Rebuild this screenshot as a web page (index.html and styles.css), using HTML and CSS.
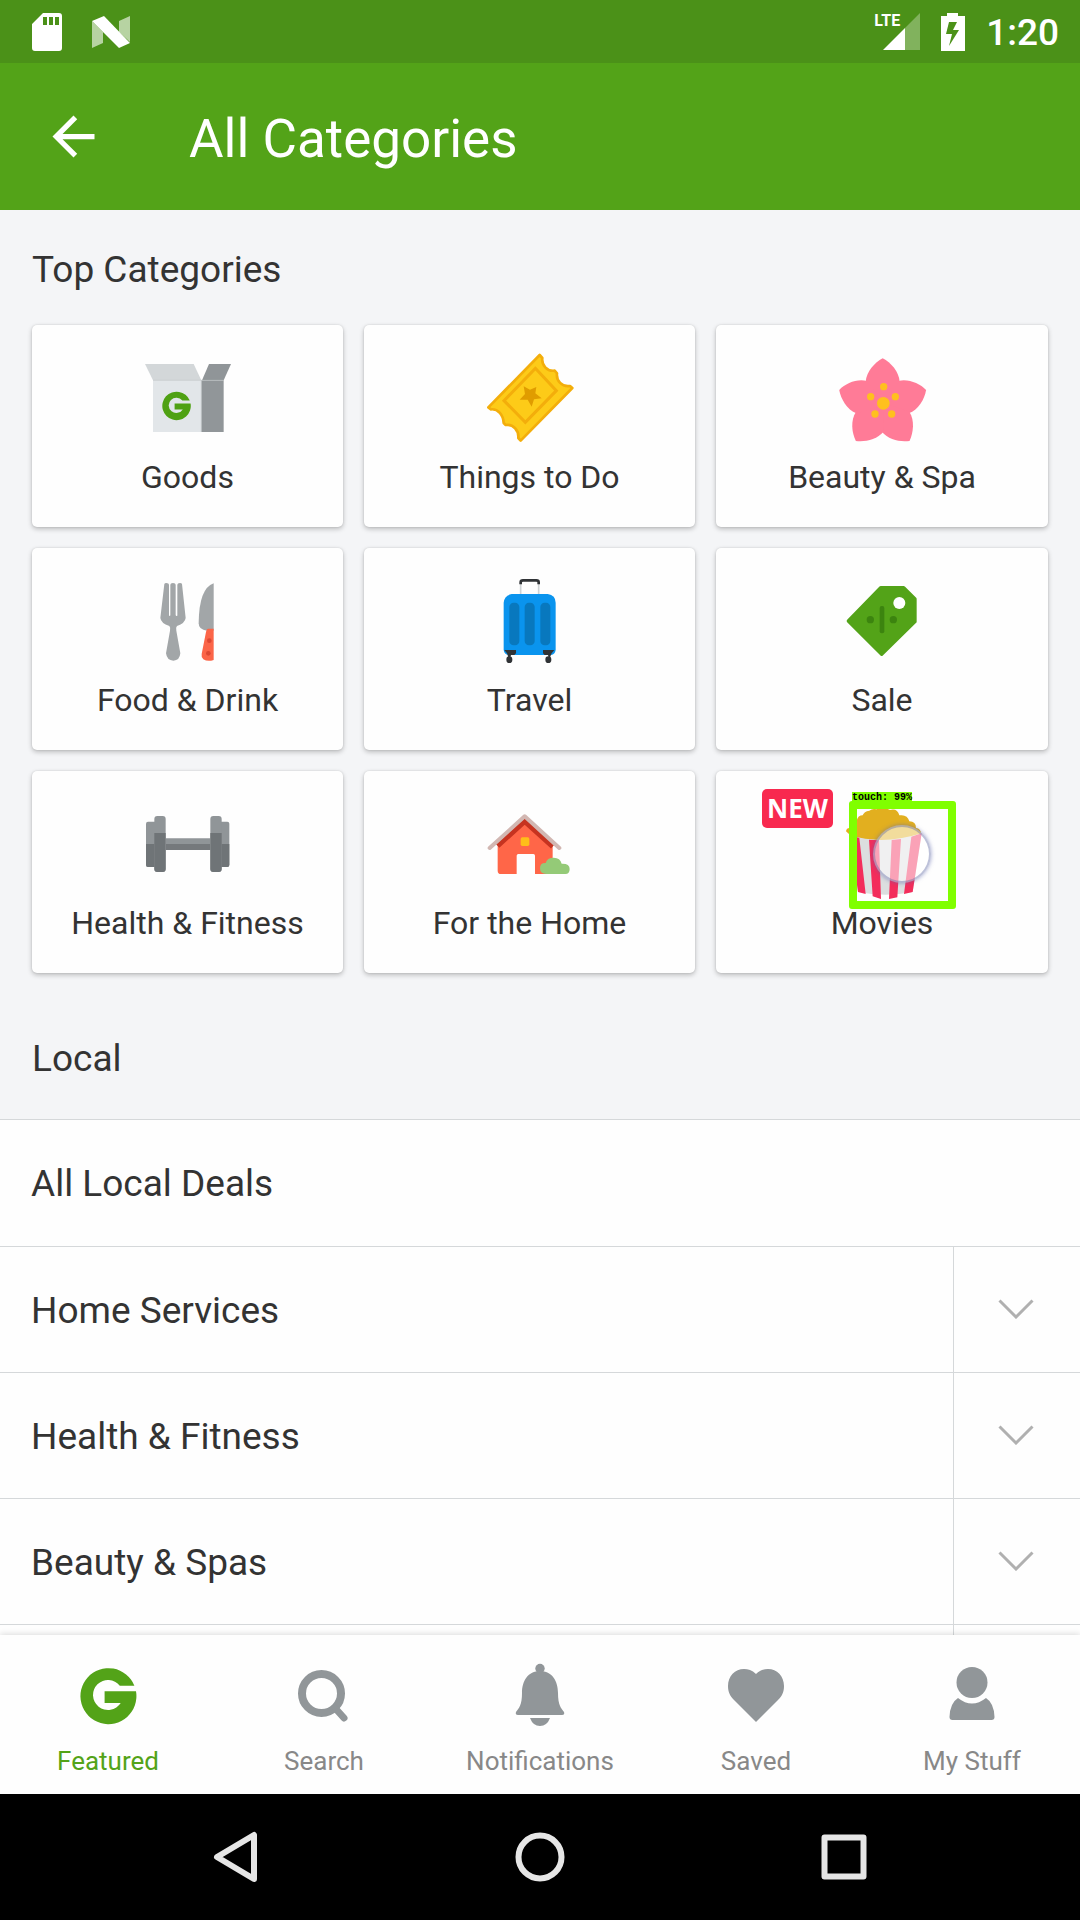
FILE: index.html
```html
<!DOCTYPE html>
<html lang="en">
<head>
<meta charset="utf-8">
<meta name="viewport" content="width=device-width, initial-scale=1">
<title>All Categories</title>
<link rel="stylesheet" href="styles.css">
</head>
<body>
<svg class="defs" aria-hidden="true">
  <symbol id="logo" viewBox="0 0 72 72"><path d="M62.400 26.700A28 28 0 1 0 64 32.300H32.600V44H48.700A15 15 0 1 1 47.800 26.700Z"/></symbol>
  <symbol id="chevron" viewBox="0 0 36 20"><path d="M1.500 1.500 18 18 34.500 1.500" fill="none" stroke="#b0b0b0" stroke-width="3"/></symbol>
</svg>
<div class="screen">
  <div class="status-bar">
    <div class="status-group notices">
      <svg width="30" height="38" viewBox="0 0 30 38"><path fill="#fff" fill-rule="evenodd" d="M11 0H27Q30 0 30 3V35Q30 38 27 38H3Q0 38 0 35V11ZM11 4V12H15V4ZM17 4V12H21V4ZM23 4V12H27V4Z"/></svg>
      <svg width="38" height="32" viewBox="0 0 38 32"><path fill="#fff" fill-opacity=".6" d="M0 5 11 16V27L0 32ZM38 0V26L27 16V5Z"/><path fill="#fff" d="M0 5 12 0 38 27 27 32Z"/></svg>
    </div>
    <div class="status-group system">
      <div class="signal">
        <span class="signal-type">LTE</span>
        <svg width="37" height="37" viewBox="0 0 37 37"><path fill="#fff" fill-opacity=".3" d="M37 0V37H22V15Z"/><path fill="#fff" d="M0 37 22 15V37Z"/></svg>
      </div>
      <svg width="24" height="38" viewBox="0 0 24 38"><path fill="#fff" fill-rule="evenodd" d="M6 0H17V3H24V38H0V3H6ZM8 9 5 21H11L8 33 18 17H12L16 9Z"/></svg>
      <span class="clock">1:20</span>
    </div>
  </div>

  <header class="app-bar">
    <button class="back" type="button" aria-label="Back"><svg width="63" height="63" viewBox="0 0 24 24"><path fill="#fff" d="M20 11H7.830l5.590-5.590L12 4l-8 8 8 8 1.410-1.410L7.830 13H20v-2z"/></svg></button>
    <h1 class="title">All Categories</h1>
  </header>

  <main class="content">
    <h2 class="section-title">Top Categories</h2>
    <div class="cards">
      <a class="card" href="#goods">
        <svg class="card-icon" viewBox="361 120 288 288">
          <path fill="#d3d7d9" d="M376 162H522L545 211H400Z"/><path fill="#e2e6e9" d="M400 211H545V366H400Z"/>
          <path fill="#909598" d="M568 162H634L612 211H547Z"/><path fill="#919699" d="M545 211H612V366H545Z"/>
          <path d="M400 211H612M545 211V366" stroke="#bfc4c7" stroke-width="2"/>
          <use href="#logo" x="415" y="231" width="110" height="110" fill="#4fa113"/>
        </svg>
        <span class="card-label">Goods</span>
      </a>
      <a class="card" href="#things">
        <svg class="card-icon" viewBox="397 120 288 288">
          <path fill="#fdcb18" stroke="#f3ae0b" stroke-width="8" stroke-linejoin="round" d="M570 135 578 144C575 165 592 185 615 182L622 190C619 212 637 232 661 228L668 234 513 392 506 384C508 362 491 341 468 345L462 339C461 315 445 296 424 298L416 292Z"/>
          <path fill="none" stroke="#f3ae0b" stroke-width="9" d="M557 175 620 242 527 337 463 272Z"/>
          <path fill="#e09c00" d="M522 229 541 239 560 231 557 250 576 265 553 268 546 290 534 269 510 269 526 252Z"/>
        </svg>
        <span class="card-label">Things to Do</span>
      </a>
      <a class="card" href="#beauty">
        <svg class="card-icon" viewBox="403 120 288 288">
          <g fill="#ff7b97">
            <path id="petal" d="M549 290 498 216C500 185 525 158 549 145C574 158 598 185 600 216Z"/>
            <use href="#petal" transform="rotate(72 549 282)"/><use href="#petal" transform="rotate(144 549 282)"/>
            <use href="#petal" transform="rotate(216 549 282)"/><use href="#petal" transform="rotate(288 549 282)"/>
          </g>
          <g fill="#ffc01e"><circle cx="551" cy="280" r="19"/><circle cx="552" cy="230" r="11"/><circle cx="513" cy="260" r="11"/><circle cx="587" cy="260" r="11"/><circle cx="526" cy="312" r="11"/><circle cx="576" cy="312" r="11"/></g>
        </svg>
        <span class="card-label">Beauty &amp; Spa</span>
      </a>

      <a class="card" href="#food">
        <svg class="card-icon" viewBox="361 99 288 288">
          <path fill="#a2a6a8" d="M434 132Q435 129 440 129Q448 129 448 134V224Q448 228 450 228T452 224V134Q452 129 460 129T468 134V224Q468 228 471 228T473 224V134Q473 129 481 129Q486 129 487 132L498 234Q496 250 472 258Q468 262 470 272L482 340Q480 362 461 362T439 340L451 272Q453 262 449 258Q424 250 422 234Z"/>
          <path fill="#a2a6a8" d="M582 130V272H562Q537 270 537 250Q538 145 582 130Z"/>
          <path fill="#fb6548" d="M566 266H582V360Q564 366 551 358Q544 352 546 342L559 276Q561 266 566 266Z"/>
          <circle cx="569" cy="302" r="7" fill="#dd4832"/><circle cx="566" cy="340" r="7" fill="#dd4832"/>
        </svg>
        <span class="card-label">Food &amp; Drink</span>
      </a>
      <a class="card" href="#travel">
        <svg class="card-icon" viewBox="1387 99 288 288">
          <path d="M1503 130V164M1557 130V164" stroke="#cfd3d5" stroke-width="5"/>
          <path fill="none" stroke="#303336" stroke-width="8" d="M1503 133V127Q1503 121 1510 121H1550Q1557 121 1557 127V133"/>
          <path fill="#0a94ee" d="M1476 162H1584Q1608 166 1608 188V330Q1606 343 1594 345H1466Q1454 343 1452 330V188Q1454 166 1476 162Z"/>
          <g fill="#0878be"><rect x="1469" y="188" width="30" height="128" rx="13"/><rect x="1515" y="188" width="30" height="128" rx="13"/><rect x="1562" y="188" width="30" height="128" rx="13"/></g>
          <g fill="#303336"><path d="M1454 330H1489V340L1484 345H1474L1472 352H1466L1462 340ZM1604 330H1570V340L1575 345H1585L1587 352H1591L1596 340Z"/><ellipse cx="1469" cy="359" rx="9" ry="10"/><ellipse cx="1586" cy="359" rx="9" ry="10"/></g>
        </svg>
        <span class="card-label">Travel</span>
      </a>
      <a class="card" href="#sale">
        <svg class="card-icon" viewBox="402 99 288 288">
          <path fill="#53a318" stroke="#53a318" stroke-width="10" stroke-linejoin="round" d="M542 143H611L645 177V245L545 343 445 243Z"/>
          <circle cx="598" cy="189" r="18" fill="#fff"/>
          <g fill="#3c840f"><circle cx="511" cy="239" r="11"/><circle cx="580" cy="239" r="11"/><rect x="539" y="198" width="14" height="82" rx="6"/></g>
        </svg>
        <span class="card-label">Sale</span>
      </a>

      <a class="card" href="#health">
        <svg class="card-icon" viewBox="360 108 288 288">
          <rect x="378" y="185" width="40" height="136" rx="6" fill="#909598"/><rect x="588" y="185" width="40" height="136" rx="6" fill="#909598"/>
          <path fill="#6f7477" d="M378 252H404V321H384Q378 321 378 315ZM628 252H602V321H622Q628 321 628 315Z"/>
          <path fill="#909598" d="M437 235H571V252H437Z"/><path fill="#75797c" d="M437 252H571V270H437Z"/>
          <rect x="403" y="168" width="34" height="168" rx="9" fill="#909598"/><rect x="571" y="168" width="34" height="168" rx="9" fill="#909598"/>
          <path fill="#6f7477" d="M403 219H437V327Q437 336 428 336H412Q403 336 403 327ZM571 219H605V327Q605 336 596 336H580Q571 336 571 327Z"/>
        </svg>
        <span class="card-label">Health &amp; Fitness</span>
      </a>
      <a class="card" href="#home">
        <svg class="card-icon" viewBox="1387 108 288 288">
          <path fill="#ff6648" fill-rule="evenodd" d="M1515 180 1599 252V342H1546V287Q1546 282 1541 282H1496Q1491 282 1491 287V342H1444Q1434 342 1434 332V252Z"/>
          <path fill="none" stroke="#c63320" stroke-width="15" d="M1434 258 1515 184 1599 260"/>
          <path fill="none" stroke="#d2b7b2" stroke-width="12" stroke-linecap="round" stroke-linejoin="round" d="M1410 264 1515 169 1619 264"/>
          <rect x="1503" y="232" width="26" height="26" rx="5" fill="#ffbd19"/>
          <path fill="#94ca77" d="M1580 342Q1561 342 1561 325T1578 309Q1582 293 1602 293T1626 311Q1650 310 1650 327T1634 342Z"/>
        </svg>
        <span class="card-label">For the Home</span>
      </a>
      <a class="card" href="#movies">
        <svg class="card-icon" viewBox="402 108 288 288">
          <path fill="#e2af1f" d="M438 214Q440 204 448 204Q450 186 470 182Q474 166 488 166Q492 154 508 152Q518 144 530 148Q548 138 570 150Q592 144 598 166Q622 162 628 184Q648 184 648 204Q662 206 664 222L640 234 550 242 460 234Z"/>
          <path fill="#dcdedf" d="M450 226Q550 256 665 220L638 396Q555 412 474 396Z"/>
          <path fill="#f32d5b" d="M450 226 478 234 497 402 474 396ZM507 239 537 241 543 417 518 409ZM575 240 603 237 592 412 567 417ZM634 230 665 220 638 396 612 402Z"/>
        </svg>
        <span class="card-label">Movies</span>
        <span class="badge">NEW</span>
        <span class="touch-box"></span>
        <span class="touch-label">touch: 99%</span>
        <span class="touch-dot"></span>
      </a>
    </div>

    <h2 class="section-title local">Local</h2>
    <ul class="list">
      <li class="row"><a class="row-link" href="#all-local">All Local Deals</a></li>
      <li class="row"><a class="row-link" href="#home-services">Home Services</a><button class="toggle" type="button" aria-label="Expand Home Services"><svg width="36" height="20"><use href="#chevron"/></svg></button></li>
      <li class="row"><a class="row-link" href="#health-fitness">Health &amp; Fitness</a><button class="toggle" type="button" aria-label="Expand Health &amp; Fitness"><svg width="36" height="20"><use href="#chevron"/></svg></button></li>
      <li class="row"><a class="row-link" href="#beauty-spas">Beauty &amp; Spas</a><button class="toggle" type="button" aria-label="Expand Beauty &amp; Spas"><svg width="36" height="20"><use href="#chevron"/></svg></button></li>
      <li class="row"><span class="row-link"></span><span class="toggle"></span></li>
    </ul>
  </main>

  <nav class="tab-bar">
    <a class="tab active" href="#featured"><svg width="72" height="72"><use href="#logo"/></svg>Featured</a>
    <a class="tab" href="#search"><svg width="72" height="72" viewBox="0 0 72 72"><circle cx="33.500" cy="34.500" r="19.500" fill="none" stroke="#919699" stroke-width="8"/><path d="M47 49 56 59" stroke="#919699" stroke-width="7" stroke-linecap="round"/></svg>Search</a>
    <a class="tab" href="#notifications"><svg width="72" height="72" viewBox="0 0 72 72"><circle cx="36" cy="9.500" r="4.700"/><path d="M36 12C48 12 54 22 54 34C54 46 57 49 60 53Q61 56 58 56H14Q11 56 12 53C15 49 18 46 18 34C18 22 24 12 36 12ZM26 59H46Q43 67 36 67T26 59Z"/></svg>Notifications</a>
    <a class="tab" href="#saved"><svg width="72" height="72" viewBox="0 0 72 72"><path d="M36 15C40 11 44 10 48 10C57 10 64 17 64 27C64 33 62 37 58 41L36 63 14 41C10 37 8 33 8 27C8 17 15 10 24 10C28 10 32 11 36 15Z"/></svg>Saved</a>
    <a class="tab" href="#my-stuff"><svg width="72" height="72" viewBox="0 0 72 72"><circle cx="36" cy="23.500" r="15.500"/><path d="M22 39Q36 50 50 39Q58 44 58.500 58Q58.500 61 55.500 61H16.500Q13.500 61 13.500 58Q14 44 22 39Z"/></svg>My Stuff</a>
  </nav>

  <div class="nav-bar">
    <button type="button" aria-label="System back"><svg width="52" height="52" viewBox="0 0 52 52"><path d="M44 4V48L7 26Z"/></svg></button>
    <button type="button" aria-label="Home"><svg width="52" height="52" viewBox="0 0 52 52"><circle cx="26" cy="26" r="21.500"/></svg></button>
    <button type="button" aria-label="Recent apps"><svg width="52" height="52" viewBox="0 0 52 52"><rect x="6.500" y="6.500" width="39" height="39"/></svg></button>
  </div>
</div>
</body>
</html>
```
FILE: styles.css
```css
* { box-sizing: border-box; }

body {
  margin: 0;
  font-family: Roboto, "Noto Sans", sans-serif;
  color: #333;
}

a { color: inherit; text-decoration: none; }

button {
  margin: 0;
  padding: 0;
  border: 0;
  background: none;
}

svg { display: block; flex: none; }

.defs { position: absolute; width: 0; height: 0; }

.screen {
  display: flex;
  flex-direction: column;
  height: 100vh;
}

/* Status bar */
.status-bar {
  display: flex;
  flex: none;
  align-items: center;
  justify-content: space-between;
  height: 63px;
  padding: 0 21px 0 32px;
  background: #4b9118;
  color: #fff;
}

.status-group { display: flex; align-items: center; }
.notices { gap: 30px; }
.system { gap: 21px; }

.signal { position: relative; }

.signal-type {
  position: absolute;
  right: 20px;
  top: -2px;
  font-size: 16px;
  font-weight: 700;
  line-height: 20px;
}

.clock {
  padding-top: 2px;
  font-size: 37px;
  font-weight: 500;
  line-height: 44px;
}

/* App bar */
.app-bar {
  display: flex;
  flex: none;
  align-items: center;
  gap: 84px;
  height: 147px;
  padding: 0 42px;
  background: #53a318;
  color: #fff;
}

.title {
  margin: 0;
  padding-top: 4px;
  font-size: 53px;
  font-weight: 400;
  line-height: 64px;
}

/* Scrolling content */
.content {
  flex: 1;
  min-height: 0;
  overflow: hidden;
  background: #f4f5f7;
}

.section-title {
  margin: 0;
  padding: 38px 32px 33px;
  font-size: 37px;
  font-weight: 400;
  line-height: 44px;
}

.local { padding: 64px 32px 38px; }

.cards {
  display: grid;
  grid-template-columns: 311fr 331fr 332fr;
  gap: 21px;
  padding: 0 32px;
}

.card {
  position: relative;
  display: flex;
  flex-direction: column;
  align-items: center;
  gap: 11px;
  padding: 25px 0 30px;
  border-radius: 5px;
  background: #fefefe;
  box-shadow: 0 2px 5px rgba(0, 0, 0, .24), 0 0 2px rgba(0, 0, 0, .12);
}

.card-icon { width: 96px; height: 96px; overflow: visible; }

.card-label { font-size: 32px; line-height: 40px; }

.badge {
  position: absolute;
  top: 18px;
  left: calc(50% - 120px);
  width: 71px;
  border-radius: 5px;
  background: #f8294f;
  color: #fff;
  font: bold 26px/39px "Open Sans", "Noto Sans", sans-serif;
  text-align: center;
}

/* Touch marker over the Movies card */
.touch-box {
  position: absolute;
  top: 30px;
  left: calc(50% - 33px);
  width: 107px;
  height: 108px;
  border: 8px solid #80ff00;
  border-radius: 3px;
}

.touch-label {
  position: absolute;
  top: 21px;
  left: calc(50% - 30px);
  background: #80ff00;
  color: #000;
  font: bold 10px/12px "Liberation Mono", monospace;
}

.touch-dot {
  position: absolute;
  top: 54px;
  left: calc(50% - 9px);
  width: 58px;
  height: 58px;
  border: 2px solid rgba(90, 100, 160, .4);
  border-radius: 50%;
  background: rgba(255, 255, 255, .56);
  box-shadow: 0 0 4px rgba(90, 100, 170, .6);
}

/* Local list */
.list {
  margin: 0;
  padding: 0;
  border-top: 1px solid #d5d8da;
  background: #fefefe;
  list-style: none;
}

.row {
  display: flex;
  height: 126px;
  border-bottom: 1px solid #d5d8da;
  font-size: 37px;
  line-height: 44px;
}

.row:first-child { height: 127px; }

.row-link {
  display: flex;
  flex: 1;
  align-items: center;
  padding: 2px 31px 0;
}

.toggle {
  display: flex;
  align-items: center;
  justify-content: center;
  width: 127px;
  padding: 0 2px 2px 0;
  border-left: 1px solid #d5d8da;
}

/* Tab bar */
.tab-bar {
  position: relative;
  display: grid;
  flex: none;
  grid-template-columns: repeat(5, 1fr);
  height: 159px;
  padding-top: 24px;
  background: #fefefe;
  box-shadow: 0 -1px 6px rgba(0, 0, 0, .14);
}

.tab {
  display: flex;
  flex-direction: column;
  align-items: center;
  gap: 14px;
  color: #888;
  font-size: 26px;
  line-height: 32px;
}

.tab svg { fill: #919699; }
.tab.active { color: #53a318; }
.tab.active svg { fill: #53a318; }

/* System navigation */
.nav-bar {
  position: relative;
  display: grid;
  flex: none;
  grid-template-columns: repeat(3, 1fr);
  height: 126px;
  padding: 0 84px;
  background: #000;
}

.nav-bar button { display: grid; place-items: center; }

.nav-bar svg {
  fill: none;
  stroke: #e6e6e6;
  stroke-width: 6;
  stroke-linejoin: round;
}
```
